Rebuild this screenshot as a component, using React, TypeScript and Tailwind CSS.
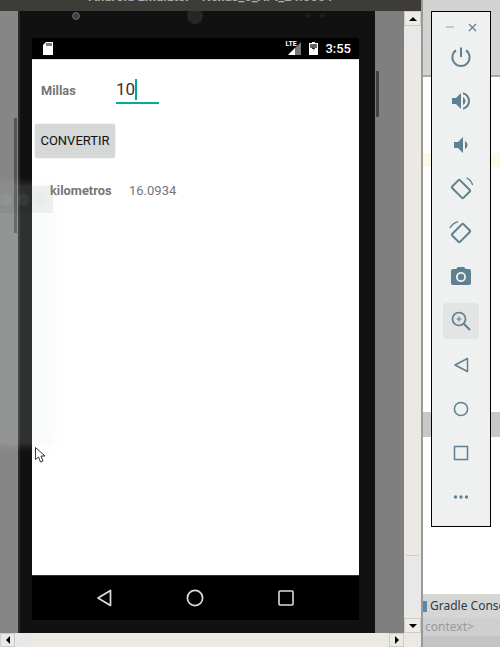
import React from 'react';

const slate = '#5f8090';

const ToolIcon: React.FC<{ children: React.ReactNode; active?: boolean }> = ({ children, active }) => (
  <div className={`w-9 h-9 flex items-center justify-center rounded ${active ? 'bg-[#e3e5e5]' : ''}`}>
    <svg width="24" height="24" viewBox="0 0 24 24" fill={slate}>
      {children}
    </svg>
  </div>
);

const EmulatorToolbar = () => (
  <div className="absolute left-[431px] top-[11px] w-[60px] h-[516px] bg-[#eff0f0] border border-black flex flex-col items-center">
    <div className="h-[26px] w-full flex items-center justify-center gap-[14px] pt-1">
      <svg width="8" height="8" viewBox="0 0 8 8"><path d="M0 4h8" stroke="#a9bac3" strokeWidth="1.4" /></svg>
      <svg width="9" height="9" viewBox="0 0 9 9"><path d="M1 1l7 7M8 1l-7 7" stroke={slate} strokeWidth="1.2" /></svg>
    </div>
    <div className="flex flex-col items-center gap-2 mt-[1px]">
      <ToolIcon>
        <path d="M12 2.5v9.5" stroke={slate} strokeWidth="2" fill="none" />
        <path d="M7 5.4a8.6 8.6 0 1 0 10 0" stroke={slate} strokeWidth="2" fill="none" />
      </ToolIcon>
      <ToolIcon>
        <path d="M3 9v6h4l5 5V4L7 9H3zm13.5 3c0-1.77-1.02-3.29-2.5-4.03v8.05c1.48-.73 2.5-2.25 2.5-4.02zM14 3.23v2.06c2.89.86 5 3.54 5 6.71s-2.11 5.85-5 6.71v2.06c4.01-.91 7-4.49 7-8.77s-2.99-7.86-7-8.77z" />
      </ToolIcon>
      <ToolIcon>
        <path d="M18.5 12c0-1.77-1.02-3.29-2.5-4.03v8.05c1.48-.73 2.5-2.25 2.5-4.02zM5 9v6h4l5 5V4L9 9H5z" />
      </ToolIcon>
      <ToolIcon>
        <rect x="4" y="6.5" width="16" height="11" rx="1" transform="rotate(45 12 12)" stroke={slate} strokeWidth="2" fill="none" />
        <path d="M17.7 0.9c2.9 1.5 5 4 6 7.1" stroke={slate} strokeWidth="1.4" fill="none" />
      </ToolIcon>
      <ToolIcon>
        <rect x="4" y="6.5" width="16" height="11" rx="1" transform="rotate(-45 12 12)" stroke={slate} strokeWidth="2" fill="none" />
        <path d="M1 7c1.5-2.9 4.5-5.3 8-6.3" stroke={slate} strokeWidth="1.4" fill="none" />
      </ToolIcon>
      <ToolIcon>
        <path d="M9 2L7.17 4H4c-1.1 0-2 .9-2 2v12c0 1.1.9 2 2 2h16c1.1 0 2-.9 2-2V6c0-1.1-.9-2-2-2h-3.17L15 2H9zm3 15c-2.76 0-5-2.24-5-5s2.24-5 5-5 5 2.24 5 5-2.24 5-5 5z" />
        <circle cx="12" cy="12" r="3.2" />
      </ToolIcon>
      <ToolIcon active>
        <circle cx="10" cy="10" r="6.5" stroke={slate} strokeWidth="1.7" fill="none" />
        <path d="M15 15l6 6" stroke={slate} strokeWidth="2" />
        <path d="M7.5 10h5M10 7.5v5" stroke={slate} strokeWidth="1.2" />
      </ToolIcon>
      <ToolIcon>
        <path d="M18.5 5.5v13L6 12z" stroke={slate} strokeWidth="1.5" fill="none" strokeLinejoin="round" />
      </ToolIcon>
      <ToolIcon>
        <circle cx="12" cy="12" r="6.6" stroke={slate} strokeWidth="1.5" fill="none" />
      </ToolIcon>
      <ToolIcon>
        <rect x="5.5" y="5.5" width="13" height="13" stroke={slate} strokeWidth="1.5" fill="none" />
      </ToolIcon>
      <ToolIcon>
        <circle cx="6.5" cy="12" r="1.7" />
        <circle cx="12" cy="12" r="1.7" />
        <circle cx="17.5" cy="12" r="1.7" />
      </ToolIcon>
    </div>
  </div>
);

const Phone = () => (
  <div className="relative flex-1 bg-[#7f7f7f] overflow-hidden">
    <div className="absolute inset-y-0 left-0 w-[18px] bg-[#868686]" />
    {/* side buttons */}
    <div className="absolute left-[14px] top-[107px] w-[3px] h-[115px] bg-[#555]" />
    <div className="absolute left-[376px] top-[60px] w-[3px] h-[46px] bg-[#444]" />
    <div className="absolute inset-y-0 left-[18px] w-[357px] bg-[#111111] border-l-2 border-[#2a2a2a] pl-[12px] pt-[27px]">
      {/* camera and speaker */}
      <div className="absolute left-[52px] top-[1px] w-2 h-2 rounded-full bg-[#39424f] border border-[#666]" />
      <div className="absolute left-[167px] top-[-3px] w-4 h-4 rounded-full bg-[#262626]" />
      <div className="absolute left-[286px] top-[2px] w-[5px] h-[5px] rounded-full bg-[#1c1c1c]" />
      <div className="absolute left-[300px] top-[2px] w-[5px] h-[5px] rounded-full bg-[#1c1c1c]" />
      <div className="flex flex-col h-[582px] w-[327px]">
        {/* Status bar */}
        <div className="h-[21px] bg-black flex items-center justify-between pl-[11px] pr-[8px] shrink-0">
          <svg width="10" height="13" viewBox="0 0 10 13"><path d="M3 0h7v13H0V3z" fill="#fff" /><path d="M4 1v3M6 1v3M8 1v3" stroke="#000" /></svg>
          <div className="flex items-center">
            <span className="relative w-[16px] h-[13px] mr-[8px]">
              <svg width="16" height="13" viewBox="0 0 16 13" className="absolute inset-0"><path d="M3 13L16 0v13z" fill="#777" /><path d="M3 13L10 6v7z" fill="#fff" /></svg>
              <span className="absolute left-0 -top-[1px] text-[7px] leading-none font-bold text-white font-['Roboto',sans-serif]">LTE</span>
            </span>
            <svg width="9" height="13" viewBox="0 0 9 13" className="mr-[7px]"><path d="M3 0h3v1h3v12H0V1h3z" fill="#fff" /><path d="M1 2h7v4H1z" fill="#666" /><path d="M5 3L3 7h2L4 10l2-4H4z" fill="#000" /></svg>
            <span className="text-white text-[13px] leading-none font-medium font-['Roboto',sans-serif]">3:55</span>
          </div>
        </div>
        {/* App content */}
        <div className="flex-1 bg-white border-t border-[#ddd] font-['Roboto',sans-serif]">
          <div className="flex items-center pl-[9px] h-[52px] pt-[9px]">
            <span className="w-[75px] text-[12.8px] font-bold text-[#757575]">Millas</span>
            <div className="w-[43px] h-[26px] border-b-2 border-[#00ab9a] flex items-center">
              <span className="text-[17px] leading-none text-[#333]">10</span>
              <span className="w-[2px] h-[21px] bg-[#00ab9a]" />
            </div>
          </div>
          <button className="ml-[3px] mt-[12px] w-[80px] h-[34px] rounded-[2px] bg-[#d6d7d7] text-[13px] font-normal text-[#111] flex items-center justify-center shadow-[0_0_2px_rgba(0,0,0,0.15)]">
            CONVERTIR
          </button>
          <div className="flex items-center mt-[23px] pl-[18px] text-[13px]">
            <span className="font-bold text-[12.8px] text-[#757575] w-[79px]">kilometros</span>
            <span className="text-[#757575]">16.0934</span>
          </div>
        </div>
        {/* Nav bar */}
        <div className="h-[45px] bg-black border-t border-[#333] flex items-center shrink-0 pl-[64px] gap-[74px]">
          <svg width="16" height="18" viewBox="0 0 16 18"><path d="M14.5 1.5v15L2 9z" stroke="#ddd" strokeWidth="1.7" fill="none" strokeLinejoin="round" /></svg>
          <svg width="18" height="18" viewBox="0 0 18 18"><circle cx="9" cy="9" r="7.6" stroke="#ddd" strokeWidth="1.7" fill="none" /></svg>
          <svg width="16" height="16" viewBox="0 0 16 16"><rect x="1" y="1" width="14" height="14" stroke="#ddd" strokeWidth="1.6" fill="none" rx="1" /></svg>
        </div>
      </div>
    </div>
    {/* Ghost window fading out */}
    <div className="absolute left-0 top-[175px] w-[53px] h-[258px] bg-[#dfe8e4]/15 shadow-[0_0_10px_rgba(225,230,228,0.25)] flex flex-col">
      <div className="h-[27px] bg-black/5 flex items-center justify-end gap-[5px] pr-[7px]">
        <span className="w-[13px] h-[13px] rounded-full bg-white/5" />
        <span className="w-[13px] h-[13px] rounded-full bg-white/5" />
        <span className="w-[13px] h-[13px] rounded-full bg-[#dfe8df]/30" />
      </div>
    </div>
    <svg width="12" height="17" viewBox="0 0 12 17" className="absolute left-[35px] top-[436px]">
      <path d="M0.5 0.5v12l3-2.5 2 5 2.5-1-2-5h4z" fill="#fff" stroke="#000" strokeWidth="0.8" />
    </svg>
  </div>
);

const VScroll = () => (
  <div className="w-[17px] bg-[#f2f1ee] flex flex-col shrink-0">
    <div className="h-[15px] bg-[#eeebe6] border border-[#ccc] flex items-center justify-center">
      <span className="w-0 h-0 border-x-4 border-x-transparent border-b-4 border-b-black" />
    </div>
    <div className="h-[27px] bg-[#e9e8e6]" />
    <div className="flex-1 bg-[#ece9e4] rounded-b-sm border-b border-[#ccc]" />
    <div className="h-[62px] bg-[#e9e8e6]" />
    <div className="h-[15px] bg-[#eeebe6] border border-[#ccc] flex items-center justify-center">
      <span className="w-0 h-0 border-x-4 border-x-transparent border-t-4 border-t-black" />
    </div>
  </div>
);

export default function App() {
  return (
    <div className="relative w-[500px] h-[647px] overflow-hidden flex bg-white font-['Roboto',sans-serif]">
      <div className="w-[421px] flex flex-col shrink-0">
        <div className="h-[11px] bg-[#3e3c38] overflow-hidden text-center text-[13px] leading-[13px] text-[#aaa] font-bold">
          <div className="-mt-[10px]">Android Emulator - Nexus_5_API_24:5554</div>
        </div>
        <div className="flex flex-1 min-h-0">
          <Phone />
          <VScroll />
        </div>
        <div className="h-[14px] bg-[#ece9e4] flex items-center shrink-0">
          <div className="w-[15px] h-full flex items-center justify-center border border-[#ccc]">
            <span className="w-0 h-0 border-y-4 border-y-transparent border-r-4 border-r-black" />
          </div>
          <div className="w-[12px] h-full bg-[#e9e8e6]" />
          <div className="flex-1" />
          <div className="w-[15px] h-full flex items-center justify-center border border-[#ccc]">
            <span className="w-0 h-0 border-y-4 border-y-transparent border-l-4 border-l-black" />
          </div>
          <div className="w-[17px] h-full" />
        </div>
      </div>
      <div className="flex-1 flex flex-col border-l-2 border-[#999] min-w-0">
        <div className="h-[77px] bg-[#d3d3d1] border-b-2 border-[#aaa]" />
        <div className="h-[335px] bg-white">
          <div className="h-[14px] mt-[76px] bg-[#fbf9e8]" />
        </div>
        <div className="h-[25px] bg-[#c8c8c8]" />
        <div className="h-[157px] bg-white" />
        <div className="h-[24px] bg-[#d5d5d4] flex items-center gap-[2px] text-[12px] text-[#2e3a4a] whitespace-nowrap overflow-hidden font-['Noto_Sans',sans-serif]">
          <span className="w-[4px] h-[11px] bg-[#5b87b5] shrink-0" />
          <span className="pl-[1px]">Gradle Console</span>
        </div>
        <div className="h-[18px] bg-[#cfcfcf] pl-[2px] text-[12px] leading-[18px] text-[#999] font-['Noto_Sans',sans-serif]">context&gt;</div>
        <div className="flex-1 bg-[#c4c4c4]" />
      </div>
      <EmulatorToolbar />
    </div>
  );
}
